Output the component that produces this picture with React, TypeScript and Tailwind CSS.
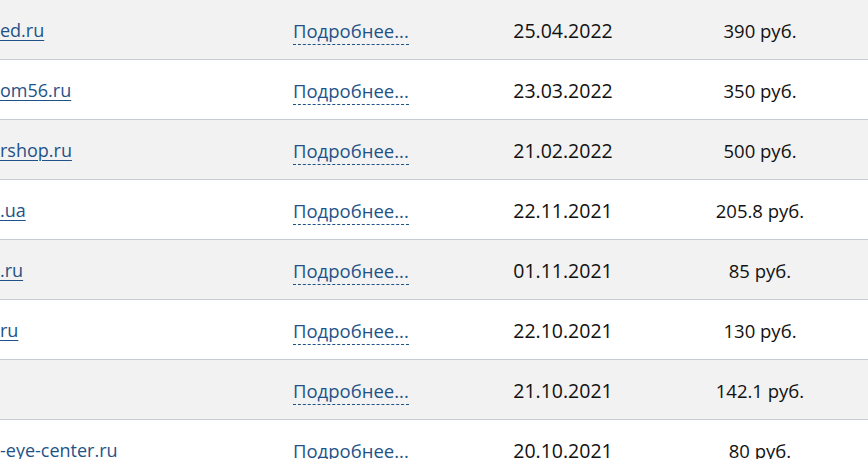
const rows = [
  { site: "ed.ru", date: "25.04.2022", price: "390 руб." },
  { site: "om56.ru", date: "23.03.2022", price: "350 руб." },
  { site: "rshop.ru", date: "21.02.2022", price: "500 руб." },
  { site: ".ua", date: "22.11.2021", price: "205.8 руб." },
  { site: ".ru", date: "01.11.2021", price: "85 руб." },
  { site: "ru", date: "22.10.2021", price: "130 руб." },
  { site: "", date: "21.10.2021", price: "142.1 руб." },
  { site: "-eye-center.ru", date: "20.10.2021", price: "80 руб." },
]

export default function App() {
  return (
    <div className="w-[868px] h-[459px] overflow-hidden bg-white font-['Open_Sans',sans-serif] text-[18px] text-[#111]">
      {rows.map((r, i) => (
        <div
          key={i}
          className={`grid grid-cols-[293px_170px_200px_194px_1fr] items-center h-[60px] pt-[2px] border-b border-[#c6ccd2] ${
            i % 2 === 0 ? "bg-[#f2f2f2]" : "bg-white"
          }`}
        >
          <div className="whitespace-nowrap">
            {r.site && (
              <a href="#" className="text-[#1f5387] underline underline-offset-[3px] decoration-1">
                {r.site}
              </a>
            )}
          </div>
          <div>
            <a href="#" className="text-[#1f5387] text-[18.5px] border-b border-dashed border-[#1f5387] pb-[1px]">
              Подробнее...
            </a>
          </div>
          <div className="text-center text-[19.5px]">{r.date}</div>
          <div className="text-center text-[18.5px]">{r.price}</div>
          <div />
        </div>
      ))}
    </div>
  )
}
